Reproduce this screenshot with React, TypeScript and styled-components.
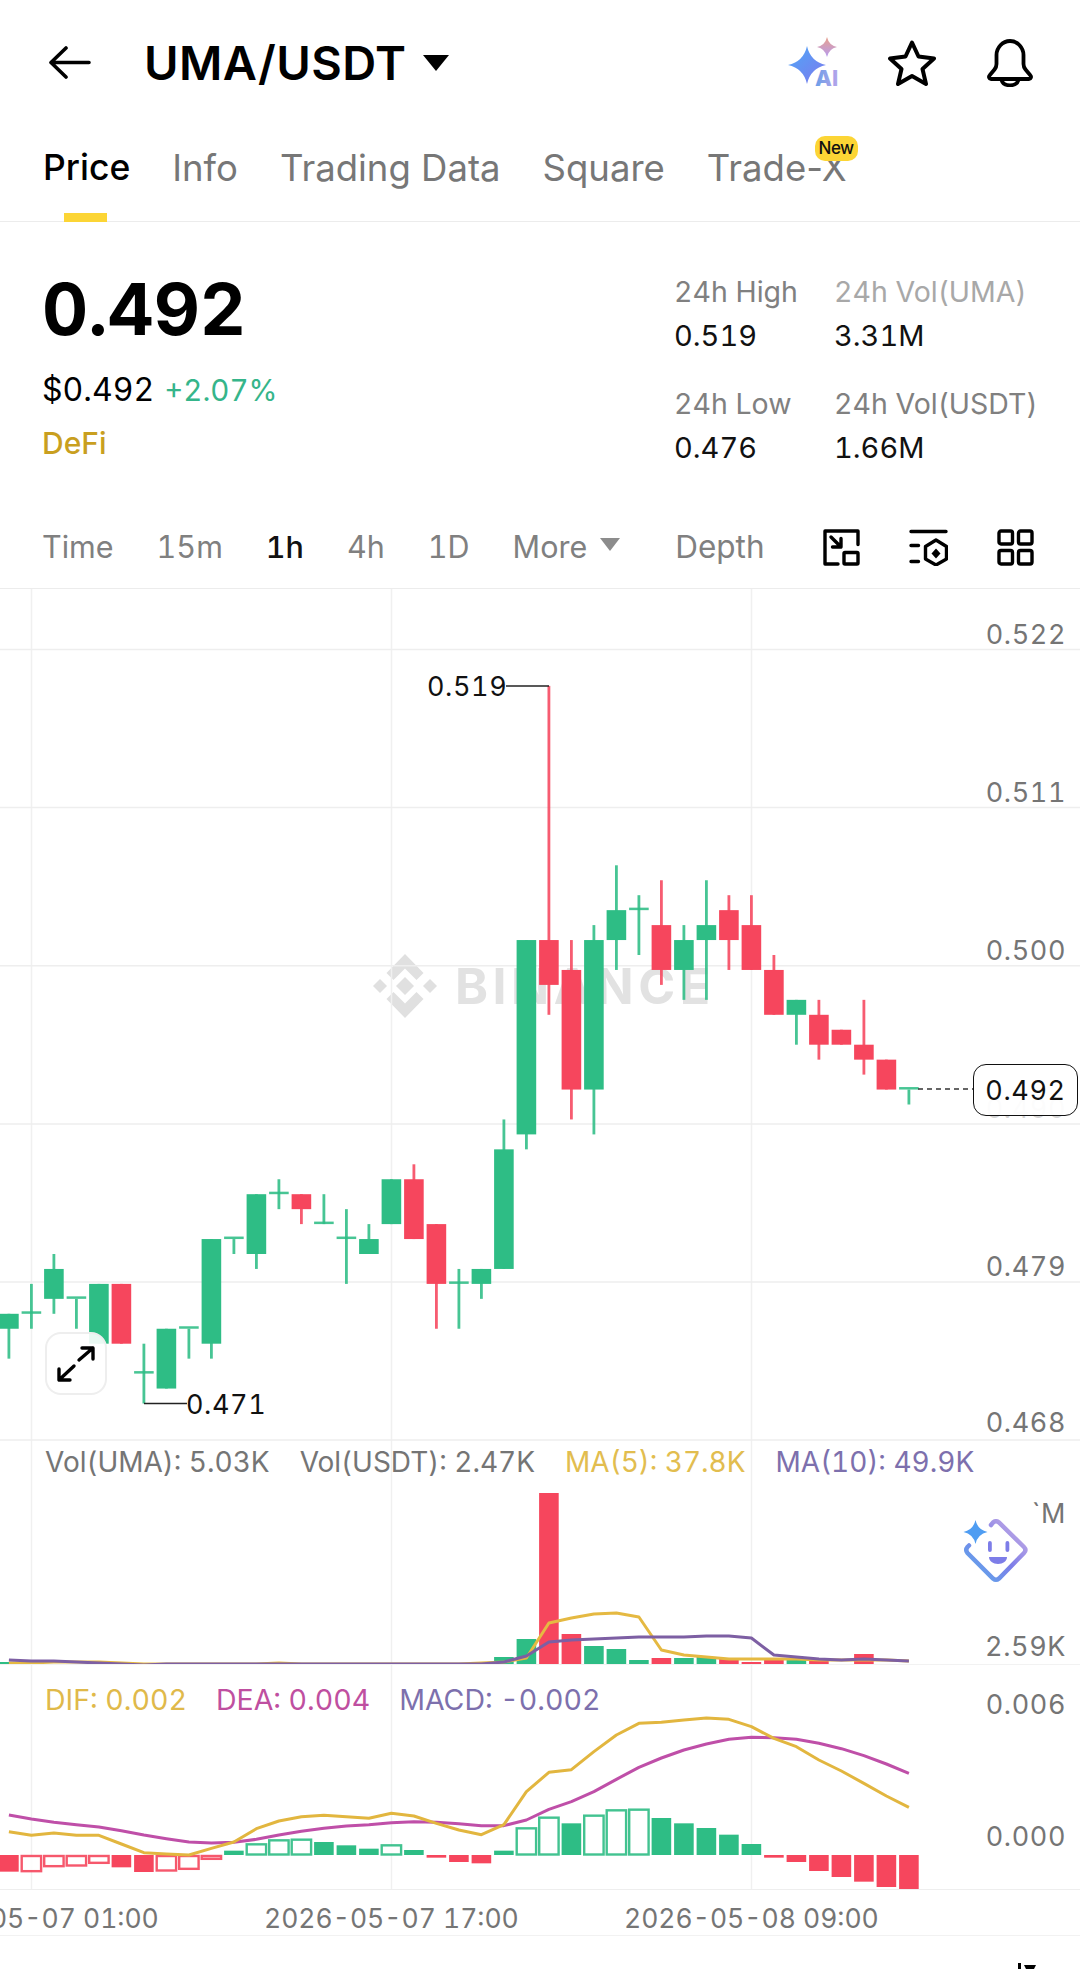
import React from "react";
import styled, { createGlobalStyle } from "styled-components";

type Candle = [string, number, number, number, number];

const GREEN = "#2ebd85";
const RED = "#f6465d";
const GRID = "#f0f0f0";
const GREY = "#757575";

const g = "g";
const r = "r";

// colour, body top, body bottom, high, low (price in thousandths)
const CANDLES: Candle[] = [
  [g, 477, 476, 477, 474],
  [g, 477, 477, 479, 476],
  [g, 480, 478, 481, 477],
  [g, 478, 478, 478, 476],
  [g, 479, 475, 479, 475],
  [r, 479, 475, 479, 475],
  [g, 473, 473, 475, 471],
  [g, 476, 472, 476, 472],
  [g, 476, 476, 476, 474],
  [g, 482, 475, 482, 474],
  [g, 482, 482, 482, 481],
  [g, 485, 481, 485, 480],
  [g, 485, 485, 486, 484],
  [r, 485, 484, 485, 483],
  [g, 483, 483, 485, 483],
  [g, 482, 482, 484, 479],
  [g, 482, 481, 483, 481],
  [g, 486, 483, 486, 483],
  [r, 486, 482, 487, 482],
  [r, 483, 479, 483, 476],
  [g, 479, 479, 480, 476],
  [g, 480, 479, 480, 478],
  [g, 488, 480, 490, 480],
  [g, 502, 489, 502, 488],
  [r, 502, 499, 519, 497],
  [r, 500, 492, 502, 490],
  [g, 502, 492, 503, 489],
  [g, 504, 502, 507, 500],
  [g, 504, 504, 505, 501],
  [r, 503, 500, 506, 499],
  [g, 502, 500, 503, 498],
  [g, 503, 502, 506, 498],
  [r, 504, 502, 505, 500],
  [r, 503, 500, 505, 500],
  [r, 500, 497, 501, 497],
  [g, 498, 497, 498, 495],
  [r, 497, 495, 498, 494],
  [r, 496, 495, 496, 495],
  [r, 495, 494, 498, 493],
  [r, 494, 492, 494, 492],
  [g, 492, 492, 492, 491],
];

// height of each volume bar, px above the pane baseline
const VOLUMES: [string, number][] = [
  [g, 3], [r, 1], [g, 1], [r, 1], [g, 1], [r, 1], [g, 1], [g, 1], [r, 1], [g, 1],
  [g, 1], [g, 1], [r, 1], [g, 1], [r, 1], [g, 1], [g, 1], [g, 1], [r, 1], [r, 1],
  [g, 1], [g, 1], [g, 8], [g, 26], [r, 172], [r, 31], [g, 19], [g, 16], [g, 5], [r, 7],
  [g, 7], [g, 8], [r, 7], [r, 3], [r, 6], [g, 6], [r, 6], [r, 1], [r, 11],
];

const VOL_MA5 = [222, 222, 221, 221, 221, 222, 223, 223, 223, 223, 223, 223, 222, 223, 223, 223, 223, 223, 223, 223, 223, 222, 221, 217, 182, 177, 173, 172, 176, 209, 214, 216, 218, 218, 218, 218, 219, 219, 219, 219, 220];
const VOL_MA10 = [219, 220, 220, 221, 222, 223, 224, 223, 223, 223, 223, 223, 223, 223, 223, 223, 223, 223, 223, 223, 223, 223, 221, 215, 201, 199, 198, 197, 196, 196, 196, 195, 195, 197, 214, 216, 218, 219, 218, 219, 220];

// macd bars: top and bottom in zoom units, hollow or filled
const M_BARS: [string, number, number, boolean][] = [
  [r, 585, 635, false], [r, 585, 635, true], [r, 585, 620, true], [r, 585, 618, true], [r, 585, 610, true],
  [r, 585, 622, false], [r, 585, 636, false], [r, 585, 633, true], [r, 585, 628, true], [r, 585, 598, true],
  [g, 572, 585, false], [g, 550, 585, true], [g, 538, 585, true], [g, 536, 585, true], [g, 546, 585, false],
  [g, 556, 585, false], [g, 566, 585, false], [g, 553, 585, true], [g, 570, 585, false], [r, 585, 593, false],
  [r, 585, 606, false], [r, 585, 610, false], [g, 572, 585, false], [g, 502, 585, true], [g, 470, 585, true],
  [g, 490, 585, false], [g, 464, 585, true], [g, 448, 585, true], [g, 446, 585, true], [g, 474, 585, false],
  [g, 490, 585, false], [g, 504, 585, false], [g, 524, 585, false], [g, 552, 585, false], [r, 585, 593, false],
  [r, 585, 606, false], [r, 585, 633, false], [r, 585, 651, false], [r, 585, 665, false], [r, 585, 681, false],
  [r, 585, 690, false],
];

const DIF = [515, 526, 519, 526, 526, 552, 578, 582, 585, 565, 546, 506, 483, 470, 466, 470, 475, 460, 468, 490, 510, 524, 494, 395, 337, 329, 275, 225, 190, 187, 180, 174, 178, 200, 235, 260, 300, 333, 370, 408, 442];
const DEA = [465, 477, 487, 494, 501, 512, 525, 536, 546, 549, 547, 538, 525, 514, 505, 498, 494, 488, 485, 487, 491, 497, 497, 480, 448, 425, 395, 358, 322, 294, 270, 252, 238, 232, 233, 238, 250, 266, 287, 312, 340];

const candleX = (i: number) => 8.9 + 22.5 * i;
const KLINE_TOP = 589;
const priceY = (p: number) => 1403.5 - (p - 471) * 14.95 - KLINE_TOP;
const macdY = (z: number) => z / 3 - 5;
const colorOf = (c: string) => (c === g ? GREEN : RED);
const points = (list: number[], f: (v: number) => number) =>
  list.map((v, i) => `${candleX(i)},${f(v)}`).join(" ");

const GlobalStyle = createGlobalStyle`
  html, body {
    margin: 0;
    padding: 0;
    background: #fff;
  }
  body {
    font-family: "Inter", "Liberation Sans", sans-serif;
    font-variant-numeric: tabular-nums;
    overflow: hidden;
  }
`;

const Page = styled.div`
  width: 1080px;
  height: 1969px;
  overflow: hidden;
  background: #fff;
  color: #000;
  display: flex;
  flex-direction: column;
`;

const TopBar = styled.div`
  height: 125px;
  display: flex;
  align-items: center;
  padding: 0 47px 0 48px;
  box-sizing: border-box;
`;

const Title = styled.div`
  font-size: 47px;
  font-weight: 600;
  margin-left: 53px;
  line-height: 50px;
  letter-spacing: 0.4px;
`;

const Caret = styled.div`
  width: 0;
  height: 0;
  margin-left: 17px;
  border-left: 13px solid transparent;
  border-right: 13px solid transparent;
  border-top: 16px solid #000;
`;

const TopIcons = styled.div`
  margin-left: auto;
  display: flex;
  align-items: center;
  gap: 46px;
`;

const BellIcon = styled.svg`
  margin-left: 5px;
`;

const Tabs = styled.div`
  height: 97px;
  display: flex;
  gap: 42px;
  padding: 21px 0 0 43px;
  box-sizing: border-box;
  border-bottom: 1px solid #ececec;
  font-variant-numeric: normal;
`;

const Tab = styled.div<{ $active?: boolean }>`
  position: relative;
  height: 76px;
  font-size: ${(p) => (p.$active ? 35.5 : 36.5)}px;
  line-height: 44px;
  font-weight: ${(p) => (p.$active ? 500 : 400)};
  color: ${(p) => (p.$active ? "#000" : "#777")};
  white-space: nowrap;
  ${(p) =>
    p.$active
      ? `&::after {
    content: "";
    position: absolute;
    left: 21px;
    bottom: 0;
    width: 43px;
    height: 9px;
    background: #fcd535;
  }`
      : ""}
`;

const NewBadge = styled.span`
  position: absolute;
  right: -11px;
  top: -10px;
  width: 43px;
  height: 25px;
  border-radius: 10px;
  background: #fcd535;
  color: #111;
  font-size: 17px;
  line-height: 25px;
  font-weight: 500;
  text-align: center;
  letter-spacing: -0.5px;
`;

const Summary = styled.div`
  height: 287px;
  display: flex;
  justify-content: space-between;
  padding: 51px 0 0 42px;
  box-sizing: border-box;
`;

const PriceColumn = styled.div`
  display: flex;
  flex-direction: column;
`;

const BigPrice = styled.div`
  font-size: 71.5px;
  line-height: 73px;
  font-weight: 700;
`;

const SubPrice = styled.div`
  margin-top: 26px;
  display: flex;
  align-items: baseline;
  gap: 10px;
  font-size: 32px;
  line-height: 36px;
`;

const Change = styled.span`
  color: #35b58a;
  font-size: 29.5px;
`;

const Tag = styled.div`
  margin-top: 20px;
  font-size: 30px;
  line-height: 30px;
  font-weight: 500;
  color: #c99f1f;
`;

const Stats = styled.div`
  width: 406px;
  display: grid;
  grid-template-columns: 160px 1fr;
  row-gap: 37px;
  align-content: start;
  padding-top: 4px;
`;

const Stat = styled.div`
  display: flex;
  flex-direction: column;
  gap: 14px;
`;

const StatLabel = styled.div<{ $light?: boolean }>`
  font-size: 28.5px;
  line-height: 30px;
  color: ${(p) => (p.$light ? "#a8a8a8" : "#808080")};
  white-space: nowrap;
`;

const StatValue = styled.div`
  font-size: 29px;
  line-height: 30px;
  color: #111;
  margin-bottom: 1px;
`;

const Intervals = styled.div`
  height: 80px;
  display: flex;
  align-items: center;
  padding: 0 46px 3px 42px;
  box-sizing: border-box;
  border-bottom: 1px solid #ececec;
`;

const IntervalList = styled.div`
  display: flex;
  align-items: center;
  gap: 43px;
`;

const Interval = styled.div<{ $active?: boolean }>`
  font-size: 30.5px;
  line-height: 36px;
  font-weight: ${(p) => (p.$active ? 500 : 400)};
  color: ${(p) => (p.$active ? "#111" : "#808080")};
`;

const More = styled(Interval)`
  display: flex;
  align-items: center;
  gap: 13px;
`;

const MoreCaret = styled.span`
  width: 0;
  height: 0;
  margin-bottom: 6px;
  border-left: 10px solid transparent;
  border-right: 10px solid transparent;
  border-top: 13px solid #8c8c8c;
`;

const Depth = styled(Interval)`
  margin-left: 55px;
  font-size: 31.5px;
`;

const Tools = styled.div`
  margin-left: auto;
  display: flex;
  gap: 49px;
`;

const Pane = styled.div<{ $h: number }>`
  position: relative;
  height: ${(p) => p.$h}px;
  overflow: hidden;
  flex: none;
`;

const Chart = styled.svg`
  display: block;
  position: relative;
  z-index: 1;
`;

const Watermark = styled.div`
  position: absolute;
  left: 372px;
  top: 364px;
  display: flex;
  align-items: center;
  gap: 17px;
  color: #e2e2e2;
  font-size: 50px;
  font-weight: 700;
  letter-spacing: 4.5px;
  line-height: 66px;
`;

const Scale = styled.div<{ $pad: number; $step: number }>`
  position: absolute;
  right: 14px;
  top: 0;
  z-index: 2;
  display: grid;
  justify-items: end;
  grid-auto-rows: ${(p) => p.$step}px;
  padding-top: ${(p) => p.$pad}px;
`;

const AxisLabel = styled.span<{ $faint?: boolean }>`
  font-size: 27px;
  line-height: 28px;
  letter-spacing: 0.6px;
  color: ${(p) => (p.$faint ? "#d4d4d4" : GREY)};

  &:last-child:nth-child(6) {
    margin-top: -2px;
  }
`;

const ExtremeLabel = styled.span<{ $left: number; $top: number }>`
  position: absolute;
  left: ${(p) => p.$left}px;
  top: ${(p) => p.$top}px;
  z-index: 2;
  font-size: 27px;
  line-height: 28px;
  letter-spacing: 0.6px;
  color: #111;
`;

const LastPrice = styled.div`
  position: absolute;
  left: 973px;
  top: 475px;
  z-index: 3;
  width: 105px;
  height: 52px;
  box-sizing: border-box;
  display: flex;
  align-items: center;
  justify-content: center;
  border: 1.5px solid #111;
  border-radius: 13px;
  background: rgba(255, 255, 255, 0.92);
  font-size: 27px;
  letter-spacing: 0.6px;
  color: #111;
`;

const ExpandButton = styled.div`
  position: absolute;
  left: 45px;
  top: 743px;
  z-index: 3;
  width: 62px;
  height: 63px;
  box-sizing: border-box;
  display: flex;
  align-items: center;
  justify-content: center;
  border: 2px solid #eeeeee;
  border-radius: 16px;
  background: rgba(255, 255, 255, 0.9);
`;

const Legend = styled.div<{ $top: number; $size: number; $gap: number }>`
  position: absolute;
  left: 45px;
  top: ${(p) => p.$top}px;
  z-index: 2;
  display: flex;
  gap: ${(p) => p.$gap}px;
  font-size: ${(p) => p.$size}px;
  line-height: 32px;
  white-space: nowrap;
`;

const LegendItem = styled.span<{ $color: string }>`
  color: ${(p) => p.$color};
`;

const Assistant = styled.svg`
  position: absolute;
  left: 963px;
  top: 78px;
  z-index: 3;
`;

const TimeAxis = styled.div`
  height: 47px;
  flex: none;
  overflow: hidden;
  box-sizing: border-box;
  border-top: 1px solid #eeeeee;
  border-bottom: 1px solid #f2f2f2;
  display: flex;
  padding-top: 12px;
`;

const TimeLabels = styled.div`
  display: grid;
  grid-template-columns: repeat(3, 360px);
  margin-left: -148.6px;
`;

const TimeLabel = styled.span`
  text-align: center;
  font-size: 26.5px;
  line-height: 32px;
  color: ${GREY};
  white-space: nowrap;
`;

const BottomEdge = styled.div`
  flex: 1;
  display: flex;
  justify-content: flex-end;
  align-items: flex-end;
  padding-right: 44px;
`;

const BackIcon = () => (
  <svg width="43" height="33" viewBox="0 0 43 33" fill="none" stroke="#000" strokeWidth="3.6" strokeLinecap="round" strokeLinejoin="round">
    <path d="M3 16.5H41M18 2L3 16.5L18 31" />
  </svg>
);

const sparkle = (cx: number, cy: number, rad: number) =>
  `M${cx} ${cy - rad}Q${cx + rad * 0.18} ${cy - rad * 0.18} ${cx + rad} ${cy}Q${cx + rad * 0.18} ${cy + rad * 0.18} ${cx} ${cy + rad}Q${cx - rad * 0.18} ${cy + rad * 0.18} ${cx - rad} ${cy}Q${cx - rad * 0.18} ${cy - rad * 0.18} ${cx} ${cy - rad}Z`;

const AiIcon = () => (
  <svg width="54" height="52" viewBox="0 0 54 52">
    <defs>
      <linearGradient id="aiBlue" x1="0" y1="0" x2="1" y2="1">
        <stop offset="0" stopColor="#4fa8f7" />
        <stop offset="1" stopColor="#7d78ee" />
      </linearGradient>
      <linearGradient id="aiPink" x1="0" y1="0" x2="0" y2="1">
        <stop offset="0" stopColor="#e8a08c" />
        <stop offset="1" stopColor="#b79cf0" />
      </linearGradient>
      <linearGradient id="aiText" x1="0" y1="0" x2="1" y2="0">
        <stop offset="0" stopColor="#6a9fe8" />
        <stop offset="1" stopColor="#b6a4ea" />
      </linearGradient>
    </defs>
    <path d={sparkle(19, 28, 19)} fill="url(#aiBlue)" />
    <path d={sparkle(39, 10, 10)} fill="url(#aiPink)" />
    <text x="27" y="49" fontSize="22" fontWeight="800" fontFamily="Inter, sans-serif" fill="url(#aiText)">
      AI
    </text>
  </svg>
);

const StarIcon = () => (
  <svg width="48" height="46" viewBox="0 0 48 46" fill="none" stroke="#000" strokeWidth="4" strokeLinejoin="round">
    <path d="M24 2.5L30.5 16.5L46 18.5L34.5 29L38 44L24 36L10 44L13.5 29L2 18.5L17.5 16.5Z" />
  </svg>
);

const Bell = () => (
  <BellIcon width="46" height="48" viewBox="0 0 46 48" fill="none" stroke="#000" strokeWidth="3.8" strokeLinecap="round" strokeLinejoin="round">
    <path d="M4 40H42C44 40 44.5 37.5 43.5 36.5L38.5 30.5Q36.5 28 36.5 25V16C36.5 8.5 30.5 2 23 2S9.5 8.5 9.5 16V25Q9.5 28 7.5 30.5L2.5 36.5C1.5 37.5 2 40 4 40Z" />
    <path d="M14.5 41C15.5 44.5 19 46.3 23 46.3S30.5 44.5 31.5 41" />
  </BellIcon>
);

const ResizeIcon = () => (
  <svg width="37" height="37" viewBox="0 0 37 37" fill="none" stroke="#000" strokeWidth="3.4" strokeLinecap="round" strokeLinejoin="round">
    <path d="M35 15.5V2H2V35H15" />
    <rect x="21" y="23.5" width="14" height="11.5" rx="1" />
    <path d="M8 8L18 18M18 9.5V18H9.5" />
  </svg>
);

const IndicatorIcon = () => (
  <svg width="39" height="37" viewBox="0 0 39 37" fill="none" stroke="#000" strokeWidth="3.4" strokeLinecap="round" strokeLinejoin="round">
    <path d="M2 2.5H37M2 16.5H9.5M2 32.5H9.5" />
    <path d="M27 12L37.5 18.5V31L27 37L16.5 31V18.5Z" transform="translate(0 -1)" />
    <path d="M27 19.5L31.5 24.5L27 29.5L22.5 24.5Z" fill="#000" stroke="none" />
  </svg>
);

const LayoutIcon = () => (
  <svg width="37" height="37" viewBox="0 0 37 37" fill="none" stroke="#000" strokeWidth="3.4" strokeLinejoin="round">
    <rect x="2" y="2" width="13.5" height="13" rx="2" />
    <rect x="21.5" y="2" width="13.5" height="13" rx="2" />
    <rect x="2" y="21.5" width="13.5" height="13.5" rx="2" />
    <rect x="21.5" y="21.5" width="13.5" height="13.5" rx="2" />
  </svg>
);

const BinanceMark = () => (
  <svg width="66" height="66" viewBox="0 0 66 66" fill="#e0e0e0">
    <path d="M14.5 20L33 1L51.5 20L44.5 27L33 15.5L21.5 27Z" />
    <path d="M14.5 46L33 65L51.5 46L44.5 39L33 50.5L21.5 39Z" />
    <path d="M1 33L8 26L15 33L8 40Z" />
    <path d="M51 33L58 26L65 33L58 40Z" />
    <path d="M33 24L42 33L33 42L24 33Z" />
  </svg>
);

const ExpandIcon = () => (
  <svg width="40" height="38" viewBox="0 0 40 38" fill="none" stroke="#000" strokeWidth="3.4" strokeLinecap="round" strokeLinejoin="round">
    <path d="M3 35L18 21M3 24V35H14" />
    <path d="M23 15L37 3M26 3H37V14" />
  </svg>
);

const AssistantIcon = () => (
  <Assistant width="66" height="66" viewBox="0 0 66 66" fill="none">
    <defs>
      <linearGradient id="botRing" x1="0" y1="1" x2="1" y2="0">
        <stop offset="0" stopColor="#58b0ec" />
        <stop offset="0.5" stopColor="#7d7de8" />
        <stop offset="1" stopColor="#d3b4e4" />
      </linearGradient>
    </defs>
    <path
      d="M28 6L30 3.5Q33 1 36 3.5L61 28Q64 31 61 34L36 59.5Q33 62 30 59.5L4.5 34Q2 31 4.5 28L6 26.5"
      stroke="url(#botRing)"
      strokeWidth="4.5"
      strokeLinecap="round"
    />
    <path d={sparkle(12.5, 13, 12)} fill="#4f9df2" />
    <rect x="25" y="22" width="3.8" height="11" rx="1.9" fill="#7d7de8" />
    <rect x="42.5" y="22" width="3.8" height="11" rx="1.9" fill="#7d7de8" />
    <path d="M26 38H44C44 42 40 45 35 45S26 42 26 38Z" fill="#7d7de8" />
  </Assistant>
);

const VerticalGrid = ({ h }: { h: number }) => (
  <>
    {[31.5, 391.5, 751.5].map((x) => (
      <line key={x} x1={x} x2={x} y1={0} y2={h} stroke={GRID} strokeWidth="1.5" />
    ))}
  </>
);

const KlinePane = () => (
  <Pane $h={852}>
    <Watermark>
      <BinanceMark />
      <span>BINANCE</span>
    </Watermark>
    <Chart width="1080" height="852" viewBox="0 0 1080 852">
      <VerticalGrid h={852} />
      {[649.5, 807.5, 965.7, 1124, 1282, 1440].map((y) => (
        <line key={y} x1={0} x2={1080} y1={y - KLINE_TOP} y2={y - KLINE_TOP} stroke="#eeeeee" strokeWidth="1.5" />
      ))}
      {CANDLES.map(([c, top, bottom, high, low], i) => {
        const x = candleX(i);
        const fill = colorOf(c);
        const doji = top === bottom;
        return (
          <g key={i}>
            <rect x={x - 1.4} y={priceY(high)} width="2.8" height={priceY(low) - priceY(high)} fill={fill} opacity="0.88" />
            {doji ? (
              <rect x={x - 9.8} y={priceY(top) - 2.5} width="19.6" height="2.5" fill={fill} opacity="0.88" />
            ) : (
              <rect x={x - 9.8} y={priceY(top)} width="19.6" height={priceY(bottom) - priceY(top)} fill={fill} />
            )}
          </g>
        );
      })}
      <line x1={506} x2={549} y1={priceY(519)} y2={priceY(519)} stroke="#222" strokeWidth="1.5" />
      <line x1={144} x2={187} y1={priceY(471)} y2={priceY(471)} stroke="#222" strokeWidth="1.5" />
      <line x1={918} x2={973} y1={500} y2={500} stroke="#333" strokeWidth="1.5" strokeDasharray="5 4" />
    </Chart>
    <ExtremeLabel $left={427} $top={84}>0.519</ExtremeLabel>
    <ExtremeLabel $left={186} $top={802}>0.471</ExtremeLabel>
    <Scale $pad={32} $step={158}>
      <AxisLabel>0.522</AxisLabel>
      <AxisLabel>0.511</AxisLabel>
      <AxisLabel>0.500</AxisLabel>
      <AxisLabel $faint>0.490</AxisLabel>
      <AxisLabel>0.479</AxisLabel>
      <AxisLabel>0.468</AxisLabel>
    </Scale>
    <LastPrice>0.492</LastPrice>
    <ExpandButton>
      <ExpandIcon />
    </ExpandButton>
  </Pane>
);

const VolumePane = () => (
  <Pane $h={224}>
    <Chart width="1080" height="224" viewBox="0 0 1080 224">
      <VerticalGrid h={224} />
      {VOLUMES.map(([c, h], i) => (
        <rect key={i} x={candleX(i) - 9.8} y={224 - h} width="19.6" height={h} fill={colorOf(c)} />
      ))}
      <polyline points={points(VOL_MA5, (v) => v)} fill="none" stroke="#e5b942" strokeWidth="3" strokeLinejoin="round" />
      <polyline points={points(VOL_MA10, (v) => v)} fill="none" stroke="#7d5fa3" strokeWidth="3" strokeLinejoin="round" />
      <line x1={0} x2={1080} y1={223.5} y2={223.5} stroke="#f2f2f2" />
    </Chart>
    <Legend $top={5} $size={28} $gap={30}>
      <LegendItem $color={GREY}>Vol(UMA): 5.03K</LegendItem>
      <LegendItem $color={GREY}>Vol(USDT): 2.47K</LegendItem>
      <LegendItem $color="#e2bd4f">MA(5): 37.8K</LegendItem>
      <LegendItem $color="#7d70ad">MA(10): 49.9K</LegendItem>
    </Legend>
    <Scale $pad={59} $step={133}>
      <AxisLabel>`M</AxisLabel>
      <AxisLabel>2.59K</AxisLabel>
    </Scale>
    <AssistantIcon />
  </Pane>
);

const MacdPane = () => (
  <Pane $h={224}>
    <Chart width="1080" height="224" viewBox="0 0 1080 224">
      <VerticalGrid h={224} />
      {M_BARS.map(([c, top, bottom, hollow], i) => {
        const x = candleX(i);
        const color = colorOf(c);
        return hollow ? (
          <rect key={i} x={x - 9.7} y={macdY(top) + 1} width="19.4" height={macdY(bottom) - macdY(top) - 1.5} fill="#fff" stroke={color} strokeWidth="2.4" opacity="0.9" />
        ) : (
          <rect key={i} x={x - 9.8} y={macdY(top)} width="19.6" height={macdY(bottom) - macdY(top)} fill={color} />
        );
      })}
      <polyline points={points(DEA, macdY)} fill="none" stroke="#bf4fa8" strokeWidth="3" strokeLinejoin="round" />
      <polyline points={points(DIF, macdY)} fill="none" stroke="#e2b63f" strokeWidth="3" strokeLinejoin="round" />
    </Chart>
    <Legend $top={19} $size={28.5} $gap={29}>
      <LegendItem $color="#e0b94a">DIF: 0.002</LegendItem>
      <LegendItem $color="#bf4fa0">DEA: 0.004</LegendItem>
      <LegendItem $color="#7d70ad">MACD: -0.002</LegendItem>
    </Legend>
    <Scale $pad={26} $step={132}>
      <AxisLabel>0.006</AxisLabel>
      <AxisLabel>0.000</AxisLabel>
    </Scale>
  </Pane>
);

const App: React.FC = () => {
  return (
    <Page>
      <GlobalStyle />
      <TopBar>
        <BackIcon />
        <Title>UMA/USDT</Title>
        <Caret />
        <TopIcons>
          <AiIcon />
          <StarIcon />
          <Bell />
        </TopIcons>
      </TopBar>
      <Tabs>
        <Tab $active>Price</Tab>
        <Tab>Info</Tab>
        <Tab>Trading Data</Tab>
        <Tab>Square</Tab>
        <Tab>
          Trade-X
          <NewBadge>New</NewBadge>
        </Tab>
      </Tabs>
      <Summary>
        <PriceColumn>
          <BigPrice>0.492</BigPrice>
          <SubPrice>
            <span>$0.492</span>
            <Change>+2.07%</Change>
          </SubPrice>
          <Tag>DeFi</Tag>
        </PriceColumn>
        <Stats>
          <Stat>
            <StatLabel>24h High</StatLabel>
            <StatValue>0.519</StatValue>
          </Stat>
          <Stat>
            <StatLabel $light>24h Vol(UMA)</StatLabel>
            <StatValue>3.31M</StatValue>
          </Stat>
          <Stat>
            <StatLabel>24h Low</StatLabel>
            <StatValue>0.476</StatValue>
          </Stat>
          <Stat>
            <StatLabel>24h Vol(USDT)</StatLabel>
            <StatValue>1.66M</StatValue>
          </Stat>
        </Stats>
      </Summary>
      <Intervals>
        <IntervalList>
          <Interval>Time</Interval>
          <Interval>15m</Interval>
          <Interval $active>1h</Interval>
          <Interval>4h</Interval>
          <Interval>1D</Interval>
          <More>
            More
            <MoreCaret />
          </More>
        </IntervalList>
        <Depth>Depth</Depth>
        <Tools>
          <ResizeIcon />
          <IndicatorIcon />
          <LayoutIcon />
        </Tools>
      </Intervals>
      <KlinePane />
      <VolumePane />
      <MacdPane />
      <TimeAxis>
        <TimeLabels>
          <TimeLabel>2026-05-07 01:00</TimeLabel>
          <TimeLabel>2026-05-07 17:00</TimeLabel>
          <TimeLabel>2026-05-08 09:00</TimeLabel>
        </TimeLabels>
      </TimeAxis>
      <BottomEdge>
        <svg width="18" height="6" viewBox="0 0 18 6" fill="#000">
          <rect x="0" y="0" width="3" height="6" />
          <path d="M6 2H18L16 6H8Z" />
        </svg>
      </BottomEdge>
    </Page>
  );
};

export default App;
